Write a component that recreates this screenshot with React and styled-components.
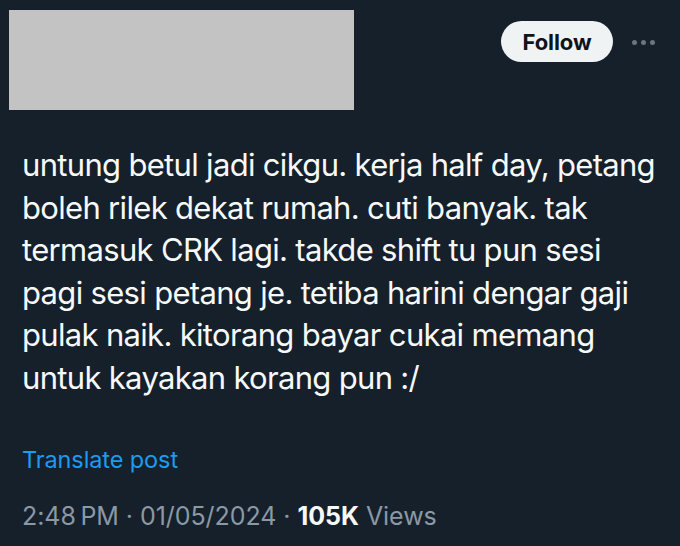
import React from "react";
import styled, { createGlobalStyle } from "styled-components";

const Global = createGlobalStyle`
  html, body { margin: 0; padding: 0; background: #15202b; }
  body { width: 680px; height: 546px; overflow: hidden; }
`;

const Card = styled.div`
  width: 680px;
  height: 546px;
  box-sizing: border-box;
  background: #15202b;
  padding: 10px 0 0 0;
  display: flex;
  flex-direction: column;
  font-family: Inter, "Noto Sans", sans-serif;
`;

const Header = styled.div`
  display: flex;
  align-items: flex-start;
  padding: 0 25px 0 9px;
`;

const Redacted = styled.div`
  width: 345px;
  height: 100px;
  background: #c3c3c3;
`;

const Actions = styled.div`
  margin-left: auto;
  margin-top: 11px;
  display: flex;
  align-items: center;
  gap: 19px;
`;

const FollowButton = styled.button`
  width: 112px;
  height: 41px;
  border: none;
  border-radius: 21px;
  background: #eff3f4;
  color: #0f1419;
  font-family: Inter, "Noto Sans", sans-serif;
  font-weight: 700;
  font-size: 22px;
  letter-spacing: -0.1px;
  padding: 0;
`;

const MoreDots = styled.div`
  display: flex;
  gap: 4px;
  padding-top: 1px;
`;

const Dot = styled.span`
  width: 5px;
  height: 5px;
  border-radius: 50%;
  background: #6b7580;
`;

const Body = styled.p`
  margin: 34px 0 0 22px;
  color: #f7f9f9;
  font-size: 31px;
  line-height: 42.5px;
  letter-spacing: -0.68px;
  white-space: nowrap;
`;

const Translate = styled.div`
  margin: 46px 0 0 22px;
  color: #1d9bf0;
  font-size: 23.5px;
  line-height: 30px;
  letter-spacing: -0.1px;
`;

const Meta = styled.div`
  margin: 25px 0 0 22px;
  color: #8b98a5;
  font-size: 25px;
  line-height: 32px;
  letter-spacing: -0.05px;
`;

const Strong = styled.span`
  color: #f7f9f9;
  font-weight: 700;
`;

export default function App() {
  return (
    <Card>
      <Global />
      <Header>
        <Redacted />
        <Actions>
          <FollowButton>Follow</FollowButton>
          <MoreDots>
            <Dot />
            <Dot />
            <Dot />
          </MoreDots>
        </Actions>
      </Header>
      <Body>
        untung betul jadi cikgu. kerja half day, petang
        <br />
        boleh rilek dekat rumah. cuti banyak. tak
        <br />
        termasuk CRK lagi. takde shift tu pun sesi
        <br />
        pagi sesi petang je. tetiba harini dengar gaji
        <br />
        pulak naik. kitorang bayar cukai memang
        <br />
        untuk kayakan korang pun :/
      </Body>
      <Translate>Translate post</Translate>
      <Meta>
        2:48{"\u202F"}PM · 01/05/2024 · <Strong>105K</Strong> Views
      </Meta>
    </Card>
  );
}
